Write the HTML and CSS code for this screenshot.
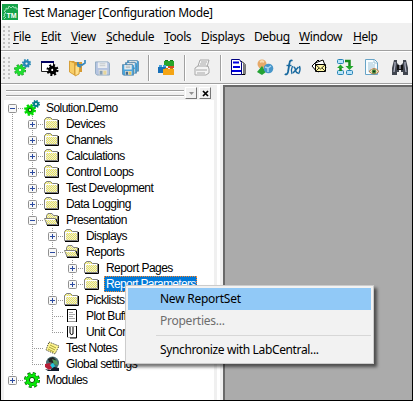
FILE: index.html
```html
<!DOCTYPE html>
<html lang="en">
<head>
<meta charset="utf-8">
<title>Test Manager</title>
<link rel="stylesheet" href="styles.css">
</head>
<body>
<svg class="defs" width="0" height="0">
  <defs>
    <pattern id="dither" width="2" height="2" patternUnits="userSpaceOnUse"><g shape-rendering="crispEdges"><rect width="2" height="2" fill="#e2e2f2"/><rect width="1" height="1" fill="#f2ec48"/><rect x="1" y="1" width="1" height="1" fill="#f2ec48"/></g></pattern>
    <symbol id="plus" viewBox="0 0 9 9"><rect x=".5" y=".5" width="8" height="8" rx="1" fill="#f8f8f8" stroke="#919191"/><path d="M2 4.500h5M4.500 2v5" stroke="#2b4aa0"/></symbol>
    <symbol id="minus" viewBox="0 0 9 9"><rect x=".5" y=".5" width="8" height="8" rx="1" fill="#f8f8f8" stroke="#919191"/><path d="M2 4.500h5" stroke="#2b4aa0"/></symbol>
    <symbol id="folder" viewBox="0 0 16 16"><path d="M.5 12.500V3.500L2.500 1.500H6.500L8.500 3.500H13.500V12.500Z" fill="url(#dither)" stroke="#808080"/><path d="M1.500 12V4.500H13" fill="none" stroke="#fff"/><path d="M1 13.500H14.500V4" fill="none" stroke="#000"/></symbol>
    <symbol id="open" viewBox="0 0 16 16"><path d="M2.500 12.500V3.500L4 1.500H8L9.500 3.500H13.500V12.500Z" fill="url(#dither)" stroke="#808080"/><path d="M.5 6.500H11.500L14 12.500H3Z" fill="url(#dither)" stroke="#808080"/><path d="M1.500 7.500H11" stroke="#fff"/><path d="M3 13.500H15M14.500 4V13M12 7l2 5" fill="none" stroke="#000"/></symbol>
    <symbol id="gear" viewBox="0 0 16 16"><circle cx="8" cy="8" r="6.500" fill="none" stroke="currentColor" stroke-width="3" stroke-dasharray="2.800 2.305"/><circle cx="8" cy="8" r="4" fill="none" stroke="currentColor" stroke-width="4"/></symbol>
    <symbol id="disk" viewBox="0 0 16 16"><path d="M.5 1.500H14L15.500 3V15.500H2L.5 14Z" fill="currentColor" stroke="#527fa3"/><path d="M3 2h10v6H3Z" fill="#e8edf0"/><path d="M5 3.500h6M5 5.500h6" stroke="#a3adb2"/><path d="M4 10h9v5H4Z" fill="#d9d9cf"/><path d="M5 11h3v4H5Z" fill="#40698d"/><path d="M9 11h3v4H9Z" fill="#e1c566"/></symbol>
  </defs>
</svg>
<div class="window">
  <header class="title">
    <svg class="logo" viewBox="0 0 16 16"><path d="M0 0h16v16H0Z" fill="#16a34a"/><path d="M1 13l2-1-1-2 2-1-2-2 2-1 0-2 2 1 1-3 2 2 2-2 1 2 2-1 0 2h2M2 15l2-2" fill="none" stroke="#b8edca" stroke-width=".8"/><text x="4.500" y="13.500">TM</text></svg>
    <h1>Test Manager [Configuration Mode]</h1>
  </header>
  <nav class="menubar">
    <i class="grip"></i>
    <span class="m file"><u>F</u>ile</span><span class="m edit"><u>E</u>dit</span><span class="m view"><u>V</u>iew</span><span class="m schedule"><u>S</u>chedule</span><span class="m tools"><u>T</u>ools</span><span class="m displays"><u>D</u>isplays</span><span class="m debug">Debu<u>g</u></span><span class="m win"><u>W</u>indow</span><span class="m help"><u>H</u>elp</span>
  </nav>
  <div class="toolbar">
    <i class="grip"></i>
    <svg class="t gears" viewBox="0 0 18 18"><g><use href="#gear" x="0" y="5" width="12" height="12" color="#0a8a14"/><use href="#gear" x=".5" y="5.500" width="11" height="11" color="#20dd30"/><use href="#gear" x="8" y="0" width="9" height="9" color="#2587b5"/></g></svg>
    <svg class="t wgear" viewBox="0 0 18 18"><path d="M.5 2.500h12v10H.5Z" fill="#fff" stroke="#222"/><path d="M0 2h13v2H0Z" fill="#000060"/><circle cx="11.500" cy="11" r="4" fill="none" stroke="#000" stroke-width="4" stroke-dasharray="1.600 1.540"/><circle cx="11.500" cy="11" r="2.800" fill="none" stroke="#000" stroke-width="3"/></svg>
    <svg class="t fold" viewBox="0 0 18 18"><path d="M1 2h4l1 1h7v10H2Z" fill="#d69a32"/><path d="M.5 2l5 2v12l-5-3Z" fill="#f8cd64" stroke="#d6a03a"/><path d="M6 6h5l-1 9-4 2Z" fill="#ffe08a" stroke="#d6a03a"/><path d="M16 1v3l-3 2-5-1M9 3v4l3 1" fill="none" stroke="#3788bd" stroke-width="1.700"/></svg>
    <svg class="t save" viewBox="0 0 16 18"><g opacity=".6"><use href="#disk" y="1" width="15" height="16" color="#8fa8d8"/></g></svg>
    <svg class="t all" viewBox="0 0 18 18"><use href="#disk" x="5" y="0" width="12" height="13" color="#4aa5dc"/><use href="#disk" x="3" y="2" width="12" height="13" color="#4aa5dc"/><use href="#disk" x="0" y="4" width="12" height="13" color="#4aa5dc"/></svg>
    <i class="sep"></i>
    <svg class="t bricks" viewBox="0 0 18 18"><path d="M6 2h10v5H6Z" fill="#28a52a"/><path d="M7 1.500h3M12 1.500h3" stroke="#127a1c"/><path d="M0 8h8v6H0Z" fill="#176fb8"/><path d="M1 7h3M5 7h3" stroke="#47a5df" stroke-width="2"/><path d="M10 7h6v2h-6Z" fill="#d84d23"/><path d="M5 10h11v6H5Z" fill="#f4a414"/><path d="M7 9.500h3M12 9.500h3" stroke="#d17a09"/></svg>
    <i class="sep"></i>
    <svg class="t print" viewBox="0 0 18 18"><path d="M4 7L6 1h9l-2 7M1 9l3-2h10l1 3v4l-3 2H1Z" fill="#f4f4f4" stroke="#a8a8a8"/><path d="M7 3h6M6 5h6M2 11h11M3 14h8" stroke="#a8a8a8"/></svg>
    <i class="sep"></i>
    <svg class="t docs" viewBox="0 0 18 18"><path d="M3 2.500h8l3 3v10H4" fill="#fff" stroke="#000"/><path d="M.5 .5h8l2 3v12H.5Z" fill="#fff" stroke="#000080"/><path d="M2 3.500h6M2 8h7M1 12h9" stroke="#0000df" stroke-width="2"/><path d="M12.500 5v10" stroke="#777"/></svg>
    <svg class="t people" viewBox="0 0 18 18"><circle cx="6" cy="5" r="4.500" fill="#e6a968"/><path d="M4 3l2-1 2 1" stroke="#f7dcb0" stroke-width="2" fill="none"/><path d="M6 7l4 6-4 3-5-3Z" fill="#23a233"/><circle cx="12.500" cy="9.500" r="4.800" fill="#4796ca"/><path d="M9 8l3 1 3-2M12 9v4" stroke="#a9d6f2" stroke-width="1.500" fill="none"/></svg>
    <svg class="t fx" viewBox="0 0 18 18"><g fill="none" stroke="#17689e" stroke-width="1.800"><path d="M8.500 1.800Q6 .5 5.500 4L4 13Q3 16.500 .8 15"/><path d="M2.500 6.500H7.500" stroke-width="1.400"/><path d="M8.500 7Q6.500 11 8 15" stroke-width="1.300"/><path d="M15.500 7Q17 11 14.500 15" stroke-width="1.300"/><path d="M9.500 8Q11 8 11.500 11T14 14M14.500 8L9 14" stroke-width="1.500"/></g></svg>
    <svg class="t notes" viewBox="0 0 18 18"><path d="M1 7l6-6 5 5-6 7Z" fill="#fff" stroke="#000"/><path d="M4 4l8-3 3 8-8 4Z" fill="#fff" stroke="#000"/><path d="M4.500 5.500h10v7h-10Z" fill="#fff7a6" stroke="#000"/><path d="M5 6l4.500 4L14 6M5 12l3-3M14 12l-3-3" fill="none" stroke="#000" stroke-width=".8"/></svg>
    <svg class="t flow" viewBox="0 0 18 18"><g fill="#b9e3fa" stroke="#2784b5"><rect x=".5" y=".5" width="6" height="4" rx="1"/><rect x=".5" y="11.500" width="6" height="4" rx="1"/><rect x="9.500" y="11.500" width="6" height="4" rx="1"/></g><path d="M3.500 12V8M8 2h4.500v6" stroke="#158a1a" stroke-width="2.500" fill="none"/><path d="M0 9l3.500-3.500L7 9ZM8.500 7h8l-4 4Z" fill="#21a728"/></svg>
    <svg class="t eye" viewBox="0 0 18 18"><path d="M.5 .5h9l3 3v12H.5Z" fill="#f8fdff" stroke="#68a4c7"/><path d="M9 1v3h3M3 4h5M3 6h7M3 8h7M3 10h3M3 12h3" stroke="#9dc2d5" fill="none"/><path d="M4 12.500q5-6 10 0q-5 5-10 0" fill="#f5dfb8" stroke="#b27a48"/><circle cx="9" cy="12.500" r="2.200" fill="#438c3d"/><circle cx="9" cy="12.500" r="1" fill="#102b18"/></svg>
    <svg class="t bino" viewBox="0 0 18 18"><path d="M2 1h3v3l2 2v7H5v3H0V9Zm9 0h3l2 8v7h-5v-3H9V6l2-2Z" fill="#414650"/><path d="M5 6h6v5H5Z" fill="#111"/><path d="M3 3v3L2 13M13 3v3l1 7M8 6v4" fill="none" stroke="#b4b7c8" stroke-width="1.200"/></svg>
  </div>
  <main class="workspace">
    <aside class="panel">
      <div class="caption"><i class="bars"></i><span class="btn"><svg viewBox="0 0 11 11"><path d="M3 4h5L5.500 7Z" fill="#929292"/></svg></span><span class="btn close"><svg viewBox="0 0 11 11"><path d="M3 3l5 5M8 3L3 8" stroke="#000" stroke-width="1.700"/></svg></span></div>
      <ul class="tree">
        <li><div class="row"><b><svg><use href="#minus"/></svg></b><svg class="ic" viewBox="0 0 16 16"><use href="#gear" x="0" y="4" width="12" height="12" color="#00d900"/><circle cx="6" cy="10" r="1.800" fill="#c9f5a6" stroke="#064806"/><use href="#gear" x="8" y="0" width="8" height="8" color="#007f88"/></svg><span>Solution.Demo</span></div>
          <ul>
            <li><div class="row"><b><svg><use href="#plus"/></svg></b><svg class="ic"><use href="#folder"/></svg><span>Devices</span></div></li>
            <li><div class="row"><b><svg><use href="#plus"/></svg></b><svg class="ic"><use href="#folder"/></svg><span>Channels</span></div></li>
            <li><div class="row"><b><svg><use href="#plus"/></svg></b><svg class="ic"><use href="#folder"/></svg><span>Calculations</span></div></li>
            <li><div class="row"><b><svg><use href="#plus"/></svg></b><svg class="ic"><use href="#folder"/></svg><span>Control Loops</span></div></li>
            <li><div class="row"><b><svg><use href="#plus"/></svg></b><svg class="ic"><use href="#folder"/></svg><span>Test Development</span></div></li>
            <li><div class="row"><b><svg><use href="#plus"/></svg></b><svg class="ic"><use href="#folder"/></svg><span>Data Logging</span></div></li>
            <li><div class="row"><b><svg><use href="#minus"/></svg></b><svg class="ic"><use href="#open"/></svg><span>Presentation</span></div>
              <ul>
                <li><div class="row"><b><svg><use href="#plus"/></svg></b><svg class="ic"><use href="#folder"/></svg><span>Displays</span></div></li>
                <li><div class="row"><b><svg><use href="#minus"/></svg></b><svg class="ic"><use href="#open"/></svg><span>Reports</span></div>
                  <ul>
                    <li><div class="row"><b><svg><use href="#plus"/></svg></b><svg class="ic"><use href="#folder"/></svg><span>Report Pages</span></div></li>
                    <li><div class="row"><b><svg><use href="#plus"/></svg></b><svg class="ic"><use href="#folder"/></svg><span class="selected">Report Parameters</span></div></li>
                  </ul>
                </li>
                <li><div class="row"><b><svg><use href="#plus"/></svg></b><svg class="ic"><use href="#folder"/></svg><span>Picklists</span></div></li>
                <li><div class="row"><b></b><svg class="ic" viewBox="0 0 16 16"><path d="M3.500 1.500h9v12h-9Z" fill="#fff" stroke="#999"/><path d="M3 1.500h9M3.500 1v13M12.500 2v12" stroke="#000"/><path d="M5 4.500h4M5 6.500h6M5 8.500h4M5 10.500h6" stroke="#aaa"/></svg><span>Plot Buffers</span></div></li>
                <li><div class="row"><b></b><svg class="ic" viewBox="0 0 16 16"><path d="M3.500 2.500h9v11h-9Z" fill="#fff" stroke="#aaa"/><path d="M3.500 2v11M12.500 2v12H6M6 3v6q1 3 3 1V3" fill="none" stroke="#000"/></svg><span>Unit Conversions</span></div></li>
              </ul>
            </li>
            <li><div class="row"><b></b><svg class="ic" viewBox="0 0 16 16"><path d="M5 2l10 4-4 8-9-4Z" fill="#fff590" stroke="#333" stroke-dasharray="1 1"/><path d="M6 5l6 3M5 7l6 3M4 9l6 3" stroke="#8f8a20" stroke-width=".8"/></svg><span>Test Notes</span></div></li>
            <li><div class="row"><b></b><svg class="ic" viewBox="0 0 16 16"><circle cx="8.500" cy="7" r="6.500" fill="#476e73"/><path d="M4 3l5-2 3 3-3 3-4-1Z" fill="#222"/><path d="M8 3l5 2 1 4-4-1Z" fill="#4f9c5a"/><path d="M1 8l5-1 3 4-4 3-4-3Z" fill="#b72038"/><path d="M6 9l3-2 2 3-2 3Z" fill="#20c9dc"/><path d="M1 13l5 1 4-3 5 1v3H4Z" fill="#111b2b"/></svg><span>Global settings</span></div></li>
          </ul>
        </li>
        <li><div class="row"><b><svg><use href="#plus"/></svg></b><svg class="ic" viewBox="0 0 16 16"><use href="#gear" width="16" height="16" color="#075907"/><use href="#gear" x=".7" y=".7" width="14.600" height="14.600" color="#08e808"/><circle cx="8" cy="8" r="2.600" fill="#fff" stroke="#075907"/></svg><span>Modules</span></div></li>
      </ul>
    </aside>
    <section class="canvas"></section>
  </main>
  <div class="popup">
    <div class="item active"><span>New ReportSet</span></div>
    <div class="item off"><span>Properties...</span></div>
    <hr>
    <div class="item sync"><span>Synchronize with LabCentral...</span></div>
  </div>
</div>
</body>
</html>
```
FILE: styles.css
```css
* { box-sizing: border-box; }
body { margin: 0; font: 12px "Noto Sans", sans-serif; color: #000; }
.defs { position: absolute; }
.window { width: 413px; height: 401px; border: 1px solid #000; background: #f0f0f0; overflow: hidden; display: flex; flex-direction: column; position: relative; }
.title { height: 22px; background: #fff; display: flex; align-items: center; padding-left: 1px; }
.logo { width: 16px; height: 16px; margin-right: 5px; }
.logo text { font: bold 7px "Liberation Sans", sans-serif; fill: #fff; }
h1 { margin: 0; font-size: 12px; font-weight: 400; letter-spacing: -.34px; white-space: nowrap; }
.menubar { height: 28px; display: flex; align-items: center; border-bottom: 1px solid #a0a0a0; letter-spacing: -.4px; }
.grip { width: 7px; height: 25px; margin: 0 5px 0 2px; flex: none; background: radial-gradient(circle at 1px 1px, #c0c0c0 1px, transparent 1.200px) 0 2px / 5px 4px; }
.m { flex: none; white-space: nowrap; }
.m u { text-underline-offset: 2px; text-decoration-thickness: 1px; text-decoration-skip-ink: none; }
.menubar .grip { margin-right: 3px; }
.file { width: 28px; }
.edit { width: 30px; }
.view { width: 35px; }
.schedule { width: 58px; }
.tools { width: 37px; }
.displays { width: 53px; }
.debug { width: 45px; }
.win { width: 54px; }
.help { width: 30px; }
.toolbar { height: 33px; display: flex; align-items: center; border-top: 1px solid #fff; border-bottom: 1px solid #a0a0a0; }
.toolbar .grip { margin-right: 4px; }
.t { width: 18px; height: 18px; flex: none; margin-right: 9px; }
.toolbar .wgear { margin-right: 10px; }
.toolbar .fold { margin-right: 8px; }
.toolbar .save { width: 16px; margin-right: 11px; }
.sep { width: 2px; height: 26px; flex: none; background: #a0a0a0; border-right: 1px solid #fff; margin-right: 8px; }
.toolbar .all, .toolbar .bricks, .toolbar .print { margin-right: 8px; }
.toolbar .docs { margin: 0 7px 0 1px; }
.toolbar .people { margin-right: 10px; }
.toolbar .notes { margin-right: 8px; }
.toolbar .flow { margin-right: 10px; }
.workspace { flex: 1; min-height: 0; display: flex; border-top: 1px solid #fff; }
.panel { width: 216px; padding-left: 3px; flex: none; display: flex; flex-direction: column; border-right: 3px solid #f0f0f0; }
.caption { height: 15px; display: flex; align-items: center; padding: 0 3px 0 2px; flex: none; }
.bars { flex: 1; height: 6px; border: solid #a0a0a0; border-width: 1px 0; box-shadow: 0 1px #fff, inset 0 1px #fff; }
.btn { width: 12px; height: 12px; margin-left: 1px; border: 1px solid; border-color: #fff #777 #777 #fff; display: flex; }
.close { margin-left: 2px; }
.btn svg { width: 11px; height: 11px; flex: none; }
.tree { flex: 1; background: #fff; margin: 0; padding: 0; overflow: hidden; font: 12px "Liberation Sans", sans-serif; }
.tree ul { margin: 0; padding: 0 0 0 20px; }
.tree li { list-style: none; position: relative; }
.tree li::before { content: ""; position: absolute; left: 8px; top: 0; bottom: 0; width: 1px; background: repeating-linear-gradient(#999 0 1px, transparent 1px 2px); }
.tree li:last-child::before { bottom: auto; height: 9px; }
.tree > li:first-child::before { top: 8px; }
.row { height: 16px; display: flex; align-items: center; white-space: nowrap; }
.row b { width: 20px; height: 16px; flex: none; padding: 4px 0 0 4px; position: relative; background: repeating-linear-gradient(90deg, #999 0 1px, transparent 1px 2px) 8px 8px / 12px 1px no-repeat; }
.row b svg { width: 9px; height: 9px; display: block; }
.ic { width: 16px; height: 16px; flex: none; }
.row span { margin-left: 4px; padding: 0 2px; height: 16px; line-height: 16px; letter-spacing: -.55px; }
.row .selected { background: #0078d7; color: #fff; outline: 1px dotted #ff8728; outline-offset: -1px; letter-spacing: -.7px; }
.canvas { flex: 1; margin-left: 6px; background: #ababab; border: solid #696969; border-width: 2px 0 0 2px; position: relative; box-shadow: -3px 0 #f0f0f0, -6px 0 #fff; }
.popup { position: absolute; left: 124px; top: 284px; width: 249px; height: 79px; padding: 2px; background: #f2f2f2; border: 1px solid #ccc; box-shadow: 3px 3px 3px rgba(0,0,0,.55); }
.item { height: 22px; padding-left: 32px; line-height: 22px; white-space: nowrap; letter-spacing: -.25px; }
.active { background: #91c9f7; }
.off { color: #6d6d6d; }
.item.sync { letter-spacing: -.36px; }
.popup hr { margin: 3px 0 3px 28px; border: 0; height: 1px; background: #d7d7d7; }
```
